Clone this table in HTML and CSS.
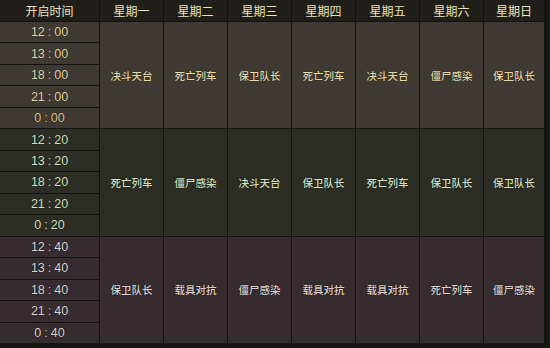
FILE: index.html
```html
<!DOCTYPE html>
<html lang="zh">
<head>
<meta charset="utf-8">
<link rel="stylesheet" href="styles.css">
</head>
<body>
<div class="table">
  <div class="hd">开启时间</div>
  <div class="hd">星期一</div>
  <div class="hd">星期二</div>
  <div class="hd">星期三</div>
  <div class="hd">星期四</div>
  <div class="hd">星期五</div>
  <div class="hd">星期六</div>
  <div class="hd">星期日</div>

  <div class="t b1">12 : 00</div>
  <div class="c b1">决斗天台</div>
  <div class="c b1">死亡列车</div>
  <div class="c b1">保卫队长</div>
  <div class="c b1">死亡列车</div>
  <div class="c b1">决斗天台</div>
  <div class="c b1">僵尸感染</div>
  <div class="c b1">保卫队长</div>
  <div class="t b1">13 : 00</div>
  <div class="t b1">18 : 00</div>
  <div class="t b1">21 : 00</div>
  <div class="t b1 last">0 : 00</div>

  <div class="t b2">12 : 20</div>
  <div class="c b2">死亡列车</div>
  <div class="c b2">僵尸感染</div>
  <div class="c b2">决斗天台</div>
  <div class="c b2">保卫队长</div>
  <div class="c b2">死亡列车</div>
  <div class="c b2">保卫队长</div>
  <div class="c b2">保卫队长</div>
  <div class="t b2">13 : 20</div>
  <div class="t b2">18 : 20</div>
  <div class="t b2">21 : 20</div>
  <div class="t b2">0 : 20</div>

  <div class="t b3">12 : 40</div>
  <div class="c b3">保卫队长</div>
  <div class="c b3">载具对抗</div>
  <div class="c b3">僵尸感染</div>
  <div class="c b3">载具对抗</div>
  <div class="c b3">载具对抗</div>
  <div class="c b3">死亡列车</div>
  <div class="c b3">僵尸感染</div>
  <div class="t b3">13 : 40</div>
  <div class="t b3">18 : 40</div>
  <div class="t b3">21 : 40</div>
  <div class="t b3">0 : 40</div>
</div>
</body>
</html>
```
FILE: styles.css
```css
html, body {
  margin: 0;
  padding: 0;
  background: #161615;
}
body {
  width: 550px;
  height: 348px;
  overflow: hidden;
}
.table {
  display: grid;
  grid-template-columns: 99px repeat(6, 63px) 60px;
  grid-template-rows: 21px repeat(15, 1fr);
  gap: 1px;
  height: 343px;
  width: 545px;
  background: #121211;
  font-family: "Liberation Sans", "Noto Sans CJK SC", sans-serif;
}
.hd {
  background: #1f1e1b;
  color: #eee2b6;
  font-family: "Noto Sans CJK SC", sans-serif;
  font-size: 12px;
  display: flex;
  align-items: center;
  justify-content: center;
  padding-bottom: 1px;
}
.t {
  grid-column: 1;
  display: flex;
  align-items: center;
  justify-content: center;
  font-size: 12.5px;
  word-spacing: -0.5px;
  text-shadow: 0 0 1px #000;
}
.c {
  grid-row: span 5;
  display: flex;
  align-items: center;
  justify-content: center;
  font-family: "Noto Sans CJK SC", sans-serif;
  font-size: 10.5px;
  font-weight: 500;
  text-shadow: 0 0 1px #000;
}
.b1 {
  background: #3e3a33;
  color: #e8d8a3;
}
.b1.last {
  color: #e3c68c;
}
.b2 {
  background: #2c2d25;
  color: #d7e0bd;
}
.b3 {
  background: #362b2f;
  color: #ded4cc;
}
```
